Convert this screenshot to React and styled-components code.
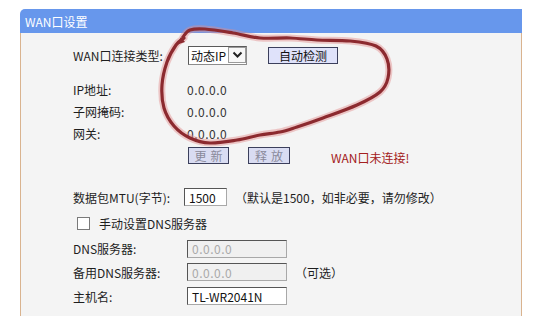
import React from "react";
import styled, { createGlobalStyle } from "styled-components";

const GlobalStyle = createGlobalStyle`
  html, body {
    margin: 0;
    padding: 0;
    background: #ffffff;
  }
  body {
    font-family: "Noto Sans CJK SC", "DejaVu Sans", sans-serif;
    font-size: 12px;
    color: #1e1e1e;
  }
`;

const Page = styled.div`
  position: relative;
  width: 552px;
  height: 316px;
  overflow: hidden;
  padding-top: 9px;
  box-sizing: border-box;
`;

const Panel = styled.section`
  margin-left: 20px;
  width: 502px;
`;

const PanelHeader = styled.div`
  height: 24px;
  background: #6797ec;
  border-top-left-radius: 5px;
  color: #ffffff;
  display: flex;
  align-items: center;
  padding-left: 5px;
  font-size: 12px;
`;

const PanelBody = styled.div`
  background: #f4f4f4;
  border-left: 1px solid #d9b38f;
  border-right: 1px solid #d9b38f;
  padding: 12px 0 20px 52px;
  height: 300px;
  box-sizing: border-box;
`;

const Row = styled.div`
  display: flex;
  align-items: center;
  height: ${(p) => p.$h || 22}px;
  margin-top: ${(p) => p.$mt || 0}px;
`;

const Label = styled.span`
  width: 114px;
  flex-shrink: 0;
  color: #1e1e1e;
`;

const Value = styled.span`
  color: #333;
  letter-spacing: 0.5px;
`;

const FakeSelect = styled.div`
  display: flex;
  align-items: center;
  width: 59px;
  height: 19px;
  margin-left: 1px;
  box-sizing: border-box;
  border: 1px solid #8c8c8c;
  border-top-color: #5a5a5a;
  border-left-color: #5a5a5a;
  background: #ffffff;
  padding-left: 2px;
  color: #111;
`;

const SelectText = styled.span`
  flex: 1;
  white-space: nowrap;
`;

const SelectArrow = styled.span`
  width: 18px;
  height: 16px;
  margin-right: 0;
  box-sizing: border-box;
  border: 1px solid #9a9a9a;
  background: #f7f7f7;
  display: flex;
  align-items: center;
  justify-content: center;
`;

const Button = styled.button`
  font-family: inherit;
  font-size: 12px;
  height: 17px;
  width: ${(p) => p.$w}px;
  margin-left: ${(p) => p.$ml || 0}px;
  padding: 0;
  box-sizing: border-box;
  border: 1px solid #3b3f5c;
  background: ${(p) => (p.$disabled ? "#d9dcf2" : "#dfe2fa")};
  color: ${(p) => (p.$disabled ? "#8a8a9a" : "#111")};
  letter-spacing: ${(p) => (p.$spaced ? "4px" : "0")};
  text-indent: ${(p) => (p.$spaced ? "4px" : "0")};
  line-height: 15px;
`;

const Status = styled.span`
  margin-left: 41px;
  color: #a32020;
  padding-top: 3px;
`;

const TextInput = styled.div`
  width: ${(p) => p.$w}px;
  height: 18px;
  margin-left: ${(p) => p.$ml || 0}px;
  box-sizing: border-box;
  border: 1px solid #a8a8a8;
  border-top-color: #555;
  border-left-color: #555;
  background: ${(p) => (p.$disabled ? "#f0f0f0" : "#ffffff")};
  color: ${(p) => (p.$disabled ? "#a9a9a9" : "#111")};
  padding-left: 4px;
  display: flex;
  align-items: center;
  letter-spacing: ${(p) => (p.$disabled ? "0.5px" : "0")};
`;

const Hint = styled.span`
  margin-left: ${(p) => p.$ml || 8}px;
  color: #1e1e1e;
`;

const CheckBox = styled.span`
  width: 13px;
  height: 13px;
  margin-left: 4px;
  box-sizing: border-box;
  border: 1px solid #7a7a7a;
  background: #ffffff;
`;

const CheckLabel = styled.span`
  margin-left: 9px;
  color: #1e1e1e;
`;

const Annotation = styled.svg`
  position: absolute;
  left: 0;
  top: 0;
  pointer-events: none;
`;

const loop = [
  [183, 37], [190, 30], [205, 29], [233, 33], [260, 38], [290, 38],
  [317, 40], [350, 41], [376, 46], [387, 59], [388, 78], [380, 92],
  [357, 105], [323, 118], [297, 127], [280, 132], [260, 135],
  [237, 140], [210, 143], [190, 138], [174, 126], [164, 108],
  [162, 85], [167, 62], [176, 45], [184, 38],
];

function smoothPath(pts) {
  let d = `M${pts[0][0]},${pts[0][1]}`;
  for (let i = 0; i < pts.length - 1; i++) {
    const p0 = pts[i - 1] || pts[i];
    const p1 = pts[i];
    const p2 = pts[i + 1];
    const p3 = pts[i + 2] || p2;
    const c1x = p1[0] + (p2[0] - p0[0]) / 6;
    const c1y = p1[1] + (p2[1] - p0[1]) / 6;
    const c2x = p2[0] - (p3[0] - p1[0]) / 6;
    const c2y = p2[1] - (p3[1] - p1[1]) / 6;
    d += ` C${c1x.toFixed(1)},${c1y.toFixed(1)} ${c2x.toFixed(1)},${c2y.toFixed(1)} ${p2[0]},${p2[1]}`;
  }
  return d;
}

const Chevron = () => (
  <svg width="11" height="8" viewBox="0 0 11 8">
    <path d="M1.5 1.5 L5.5 5.5 L9.5 1.5" fill="none" stroke="#222" strokeWidth="2" />
  </svg>
);

export default function App() {
  const d = smoothPath(loop);
  return (
    <Page>
      <GlobalStyle />
      <Panel>
        <PanelHeader>WAN口设置</PanelHeader>
        <PanelBody>
          <Row $h={20}>
            <Label>WAN口连接类型:</Label>
            <FakeSelect>
              <SelectText>动态IP</SelectText>
              <SelectArrow>
                <Chevron />
              </SelectArrow>
            </FakeSelect>
            <Button $w={70} $ml={21}>自动检测</Button>
          </Row>
          <Row $mt={13}>
            <Label>IP地址:</Label>
            <Value>0.0.0.0</Value>
          </Row>
          <Row>
            <Label>子网掩码:</Label>
            <Value>0.0.0.0</Value>
          </Row>
          <Row>
            <Label>网关:</Label>
            <Value>0.0.0.0</Value>
          </Row>
          <Row $h={23}>
            <Label />
            <Button $w={41} $ml={1} $disabled $spaced>更新</Button>
            <Button $w={42} $ml={19} $disabled $spaced>释放</Button>
            <Status>WAN口未连接!</Status>
          </Row>
          <Row $mt={19}>
            <Label>数据包MTU(字节):</Label>
            <TextInput $w={43} $ml={-3}>1500</TextInput>
            <Hint $ml={8}>（默认是1500，如非必要，请勿修改）</Hint>
          </Row>
          <Row $h={23} $mt={4}>
            <CheckBox />
            <CheckLabel>手动设置DNS服务器</CheckLabel>
          </Row>
          <Row $h={23} $mt={2}>
            <Label>DNS服务器:</Label>
            <TextInput $w={100} $disabled>0.0.0.0</TextInput>
          </Row>
          <Row $h={24}>
            <Label>备用DNS服务器:</Label>
            <TextInput $w={100} $disabled>0.0.0.0</TextInput>
            <Hint $ml={8}>（可选）</Hint>
          </Row>
          <Row $h={24}>
            <Label>主机名:</Label>
            <TextInput $w={100}>TL-WR2041N</TextInput>
          </Row>
        </PanelBody>
      </Panel>
      <Annotation width="552" height="316" viewBox="0 0 552 316">
        <path d={d} fill="none" stroke="rgba(226,140,140,0.45)" strokeWidth="7" strokeLinecap="round" strokeLinejoin="round" />
        <path d={d} fill="none" stroke="#8c2a2f" strokeWidth="3.2" strokeLinecap="round" strokeLinejoin="round" />
        <path d="M176 45 L181 37 L185 42 Z" fill="#8c2a2f" />
      </Annotation>
    </Page>
  );
}
